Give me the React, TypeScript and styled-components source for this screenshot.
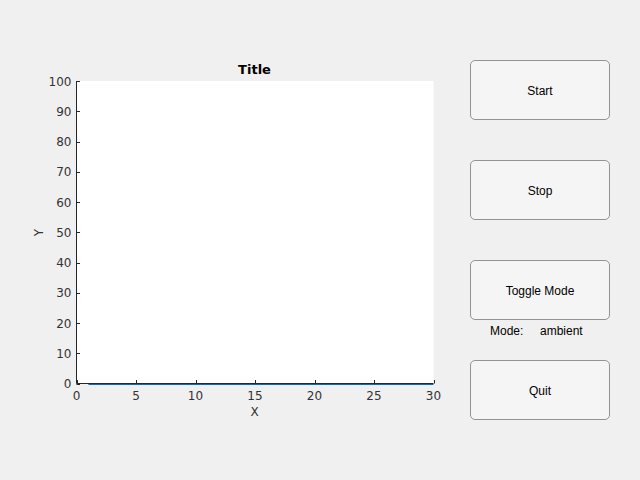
import React from "react";
import styled, { createGlobalStyle } from "styled-components";

const GlobalStyle = createGlobalStyle`
  html, body {
    margin: 0;
    padding: 0;
    background: #f0f0f0;
  }
  body {
    font-family: "Liberation Sans", Arial, sans-serif;
  }
`;

// axes geometry, in page pixels
const AX = { left: 76.5, right: 433.5, top: 81, bottom: 383.5 };
const X_MAX = 30;
const Y_MAX = 100;

const sx = (v: number) => AX.left + ((AX.right - AX.left) * v) / X_MAX;
const sy = (v: number) => AX.bottom - ((AX.bottom - AX.top) * v) / Y_MAX;

const xTicks = [0, 5, 10, 15, 20, 25, 30];
const yTicks = [0, 10, 20, 30, 40, 50, 60, 70, 80, 90, 100];

// y = 0 for samples 1..30
const data = Array.from({ length: 30 }, (_, i) => ({ x: i + 1, y: 0 }));

const Figure = styled.div`
  width: 640px;
  height: 480px;
  display: flex;
  flex-direction: row;
  overflow: hidden;
`;

const PlotArea = styled.svg`
  flex: 0 0 450px;
  height: 480px;
  font-family: "DejaVu Sans", sans-serif;
`;

const Controls = styled.div`
  flex: 0 0 140px;
  margin-left: 20px;
  padding-top: 60px;
  display: flex;
  flex-direction: column;
`;

const Slot = styled.div`
  height: 100px;
  display: flex;
  flex-direction: column;
`;

const PushButton = styled.button`
  width: 140px;
  height: 60px;
  box-sizing: border-box;
  margin: 0;
  padding: 2px 0 0;
  border: 1px solid #939393;
  border-radius: 5px;
  background: #f5f5f5;
  color: #000;
  font-family: "Liberation Sans", Arial, sans-serif;
  font-size: 12px;
  cursor: pointer;
`;

const ModeRow = styled.div`
  display: flex;
  align-items: center;
  height: 22px;
  padding-left: 20px;
  font-size: 12px;
  color: #000;
`;

const ModeLabel = styled.span`
  width: 50px;
`;

function Chart() {
  const linePoints = data.map((d) => `${sx(d.x)},${sy(d.y) + 1}`).join(" ");
  return (
    <PlotArea viewBox="0 0 450 480">
      <rect
        x={AX.left}
        y={AX.top}
        width={AX.right - AX.left}
        height={AX.bottom - AX.top}
        fill="#ffffff"
      />
      <text
        x={254.5}
        y={74}
        textAnchor="middle"
        fontSize={13}
        fontWeight="bold"
        fill="#000"
      >
        Title
      </text>
      <g stroke="#262626" strokeWidth={1}>
        <line x1={AX.left} y1={AX.top} x2={AX.left} y2={AX.bottom} />
        <line x1={AX.left} y1={AX.bottom} x2={AX.right} y2={AX.bottom} />
        {yTicks.map((t) => (
          <line
            key={"yt" + t}
            x1={AX.left}
            y1={Math.round(sy(t)) + 0.5}
            x2={AX.left + 3.5}
            y2={Math.round(sy(t)) + 0.5}
          />
        ))}
        {xTicks.map((t) => (
          <line
            key={"xt" + t}
            x1={Math.round(sx(t)) + 0.5}
            y1={AX.bottom}
            x2={Math.round(sx(t)) + 0.5}
            y2={AX.bottom - 3.5}
          />
        ))}
      </g>
      <polyline
        points={linePoints}
        fill="none"
        stroke="#0072bd"
        strokeWidth={1.2}
      />
      <g fill="#333333" fontSize={12}>
        {yTicks.map((t) => (
          <text
            key={"yl" + t}
            x={71.5}
            y={sy(t) + 4.5}
            textAnchor="end"
          >
            {t}
          </text>
        ))}
        {xTicks.map((t) => (
          <text key={"xl" + t} x={sx(t)} y={400} textAnchor="middle">
            {t}
          </text>
        ))}
        <text x={254.5} y={416} textAnchor="middle">
          X
        </text>
        <text
          x={0}
          y={0}
          textAnchor="middle"
          transform="translate(42.5 232.5) rotate(-90)"
        >
          Y
        </text>
      </g>
    </PlotArea>
  );
}

export default function App() {
  return (
    <>
      <GlobalStyle />
      <Figure>
        <Chart />
        <Controls>
          <Slot>
            <PushButton>Start</PushButton>
          </Slot>
          <Slot>
            <PushButton>Stop</PushButton>
          </Slot>
          <Slot>
            <PushButton>Toggle Mode</PushButton>
            <ModeRow>
              <ModeLabel>Mode:</ModeLabel>
              <span>ambient</span>
            </ModeRow>
          </Slot>
          <Slot>
            <PushButton>Quit</PushButton>
          </Slot>
        </Controls>
      </Figure>
    </>
  );
}
